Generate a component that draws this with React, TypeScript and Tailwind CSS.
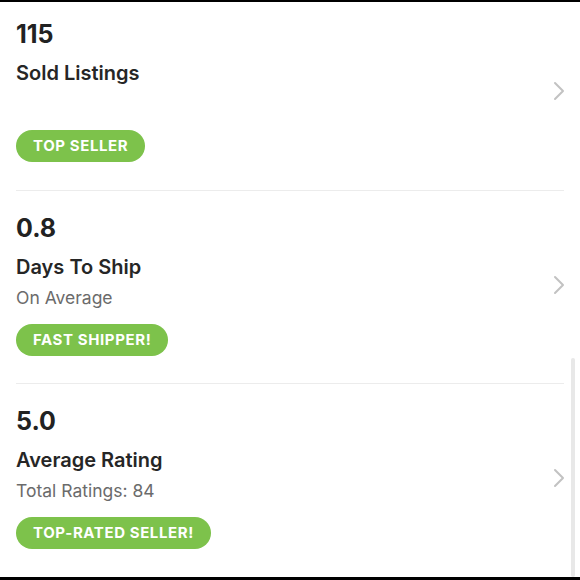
import React from 'react';

type Stat = {
  value: string;
  label: string;
  note?: string;
  badge: string;
};

const stats: Stat[] = [
  { value: '115', label: 'Sold Listings', badge: 'Top Seller' },
  { value: '0.8', label: 'Days To Ship', note: 'On Average', badge: 'Fast Shipper!' },
  { value: '5.0', label: 'Average Rating', note: 'Total Ratings: 84', badge: 'Top-Rated Seller!' }
];

function Chevron() {
  return (
    <svg width="14" height="20" viewBox="0 0 14 20" className="-mr-[2px] shrink-0">
      <path d="M3 2 L11 10 L3 18" fill="none" stroke="#c2c2c2" strokeWidth="2" strokeLinecap="round" strokeLinejoin="round" />
    </svg>
  );
}

function StatRow({ stat, first }: { stat: Stat; first: boolean }) {
  return (
    <div className={first ? 'mx-4 flex items-center pt-[17px] pb-[28px]' : 'mx-4 flex items-center border-t border-[#ececec] pt-[22px] pb-[27px]'}>
      <div className="flex flex-1 flex-col">
        <p className="text-[25px] leading-[30px] font-bold text-[#222]">{stat.value}</p>
        <p className="mt-[11px] text-[20px] leading-[26px] font-semibold text-[#262626]">{stat.label}</p>
        <p className="mt-[6px] h-[24px] text-[17.5px] leading-[24px] text-[#6b6b6b]">{stat.note ?? ''}</p>
        <div className="mt-[14px]">
          <span className="inline-flex h-[32px] items-center rounded-full bg-[#7dc24b] px-[17px] text-[15px] font-bold uppercase tracking-[0.6px] text-white">
            {stat.badge}
          </span>
        </div>
      </div>
      <Chevron />
    </div>
  );
}

export default function App() {
  return (
    <div className="relative flex h-[580px] w-[580px] flex-col overflow-hidden bg-white font-['Inter','Liberation_Sans',sans-serif]">
      <div className="h-[2px] shrink-0 bg-black" />
      <div className="flex-1">
        {stats.map((stat, i) => (
          <StatRow key={stat.label} stat={stat} first={i === 0} />
        ))}
      </div>
      <div className="h-[3px] shrink-0 bg-black" />
      <div className="absolute right-[5px] top-[358px] h-[219px] w-[4px] rounded-full bg-[#e8e8e8]" />
    </div>
  );
}
